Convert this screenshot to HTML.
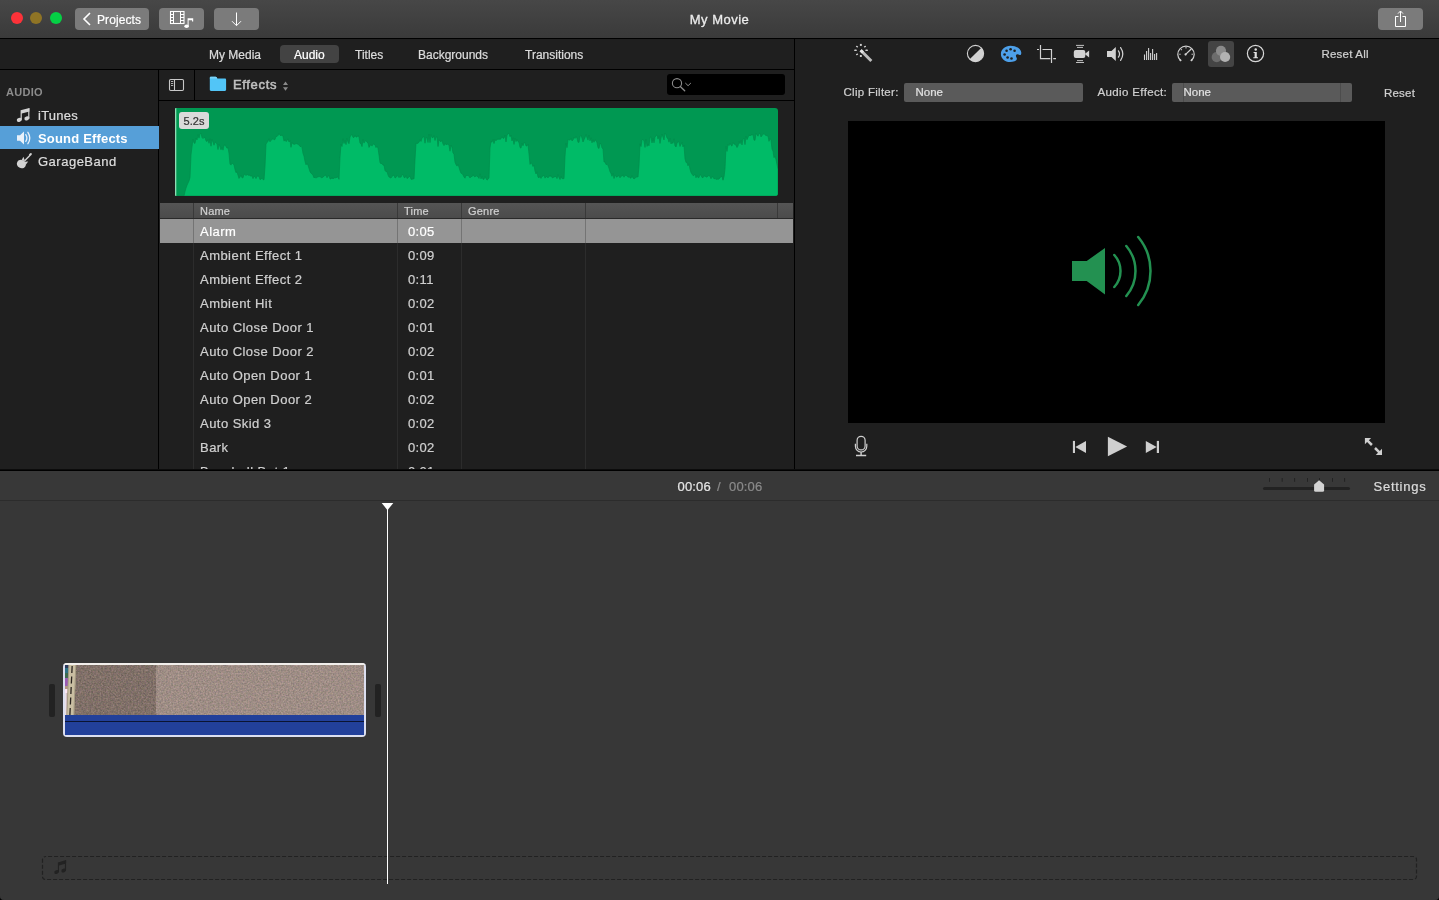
<!DOCTYPE html>
<html>
<head>
<meta charset="utf-8">
<title>My Movie</title>
<style>
*{box-sizing:border-box;margin:0;padding:0}
html,body{width:1439px;height:900px;overflow:hidden;background:#000;}
body{font-family:"Liberation Sans",sans-serif;font-size:13px;color:#d6d6d6;position:relative;-webkit-font-smoothing:antialiased;-webkit-text-stroke:.22px currentColor}
.abs{position:absolute}
#win{position:absolute;left:0;top:0;width:1439px;height:900px;background:#1f1f1f;border-radius:0 0 4px 4px;overflow:hidden;will-change:transform}
/* title bar */
#title{position:absolute;left:0;top:0;width:1439px;height:38px;background:linear-gradient(#474747,#3a3a3a)}
#title .ttl{position:absolute;left:0;width:1439px;top:12px;text-align:center;font-size:13px;color:#ececec;letter-spacing:.5px;-webkit-text-stroke:.3px #ececec}
.tl{position:absolute;top:12px;width:12px;height:12px;border-radius:50%}
.tbtn{position:absolute;top:8px;height:22px;background:#7b7b7b;border-radius:4px;color:#fff}
#titleline{position:absolute;left:0;top:38px;width:1439px;height:1px;background:#000}
/* tabs */
#tabs{position:absolute;left:0;top:39px;width:794px;height:30px}
#tabs span{position:absolute;top:9px;font-size:12px;color:#dcdcdc;white-space:nowrap}
#tabsel{position:absolute;left:280px;top:6px;width:59px;height:18px;background:#434343;border-radius:4px}
.hline{position:absolute;height:1px;background:#000}
.vline{position:absolute;width:1px;background:#000}
/* sidebar */
#side{position:absolute;left:0;top:70px;width:158px;height:399px}
#side .hd{position:absolute;left:6px;top:85px;font-size:11px;font-weight:bold;color:#8c8c8c}
.srow{position:absolute;left:0;width:159px;height:23px;font-size:13px;color:#dcdcdc}
.srow span{position:absolute;left:38px;top:5px;white-space:nowrap}
/* table */
#thead{position:absolute;left:160px;top:203px;width:633px;height:15px;background:linear-gradient(#555555,#4b4b4b);font-size:11px;color:#d0d0d0}
#thead span{position:absolute;top:2px;letter-spacing:.2px}
.row{position:absolute;left:160px;width:633px;height:24px;font-size:13px;color:#cfcfcf}
.row .n{position:absolute;left:40px;top:5px;white-space:nowrap;letter-spacing:.46px}
.row .t{position:absolute;left:248px;top:5px;white-space:nowrap;letter-spacing:.35px}
.row.sel{background:#959595;color:#fff}
/* right */
.lbl{position:absolute;font-size:11.5px;color:#d0d0d0;white-space:nowrap}
.sel2{position:absolute;height:19px;background:#5a5a5a;border-radius:2px;font-size:11.5px;color:#e0e0e0}
.sel2 span{position:absolute;left:11.500px;top:3px}
/* timeline */
#tlbar{position:absolute;left:0;top:471px;width:1439px;height:29px;background:#383838}
#tline{position:absolute;left:0;top:500px;width:1439px;height:1px;background:#2c2c2c}
#tlarea{position:absolute;left:0;top:501px;width:1439px;height:399px;background:#373737}
</style>
</head>
<body>
<div id="win">

<!-- TITLE BAR -->
<div id="title">
  <div class="tl" style="left:11px;background:#fc3239"></div>
  <div class="tl" style="left:30px;background:#8f7425"></div>
  <div class="tl" style="left:50px;background:#05d045"></div>
  <div class="tbtn" style="left:75px;width:74px">
    <svg class="abs" style="left:7px;top:4px" width="10" height="14" viewBox="0 0 10 14"><path d="M8 1 L2 7 L8 13" fill="none" stroke="#fff" stroke-width="1.6"/></svg>
    <span class="abs" style="left:22px;top:5px;font-size:12px;letter-spacing:.1px">Projects</span>
  </div>
  <div class="tbtn" style="left:159px;width:45px">
    <svg class="abs" style="left:9px;top:2px" width="28" height="20" viewBox="168 10 28 20">
      <rect x="170.500" y="11.500" width="13.500" height="12" fill="none" stroke="#fff" stroke-width="1.1"/>
      <path d="M173.500 11.500v12M180.500 11.500v12M170.500 14.500h3M170.500 17.500h3M170.500 20.500h3M180.500 14.500h3.500M180.500 17.500h3.500M180.500 20.500h3.500" fill="none" stroke="#fff" stroke-width="1"/>
      <path d="M187.600 18.300h5.600v3.200h-1.200v-1.200h-3.400v6h-1z" fill="#fff"/>
      <ellipse cx="186.600" cy="26.200" rx="2.300" ry="1.800" fill="#fff"/>
    </svg>
  </div>
  <div class="tbtn" style="left:214px;width:45px">
    <svg class="abs" style="left:16px;top:4px" width="13" height="15" viewBox="0 0 13 15"><path d="M6.5 0.5v13M2 9.2l4.500 4.500l4.500 -4.500" fill="none" stroke="#fff" stroke-width="1"/></svg>
  </div>
  <div class="ttl">My Movie</div>
  <div class="tbtn" style="left:1378px;width:45px">
    <svg class="abs" style="left:16px;top:2px" width="13" height="18" viewBox="0 0 13 18"><path d="M4.500 6.500H1.500v10h10v-10H8.500" fill="none" stroke="#fff" stroke-width="1"/><path d="M6.500 12V1.200M4 3.600l2.500-2.600l2.500 2.600" fill="none" stroke="#fff" stroke-width="1"/></svg>
  </div>
</div>
<div id="titleline"></div>

<!-- TABS -->
<div id="tabs">
  <div id="tabsel"></div>
  <span style="left:209px">My Media</span>
  <span style="left:294px;color:#fff">Audio</span>
  <span style="left:355px">Titles</span>
  <span style="left:418px">Backgrounds</span>
  <span style="left:525px">Transitions</span>
</div>
<div class="hline" style="left:0;top:69px;width:794px"></div>
<div class="vline" style="left:794px;top:39px;height:431px"></div>

<!-- SIDEBAR -->
<div class="abs" style="left:6px;top:86px;font-size:11px;font-weight:bold;color:#8c8c8c;letter-spacing:.3px;-webkit-text-stroke:0">AUDIO</div>
<svg class="abs" style="left:16px;top:107px" width="15" height="16" viewBox="0 0 15 16"><g fill="#d4d4d4"><path d="M4.600 3.300L13.400 1v3.400L5.800 6.400v6.400H4.600z"/><path d="M12.200 2v9.400h1.200V1z"/><ellipse cx="3.300" cy="12.900" rx="2.600" ry="1.900" transform="rotate(-20 3.300 12.900)"/><ellipse cx="10.900" cy="11.400" rx="2.600" ry="1.900" transform="rotate(-20 10.900 11.400)"/></g></svg>
<div class="srow" style="top:103px"><span style="letter-spacing:.25px">iTunes</span></div>
<div class="srow" style="top:126px;background:#569fd8;color:#fff;font-weight:bold;z-index:3;-webkit-text-stroke:0"><span style="letter-spacing:.18px">Sound Effects</span></div>
<svg class="abs" style="left:16px;top:152px" width="17" height="18" viewBox="16 152 17 18"><g fill="#d2d2d2"><path d="M21.600 159.900c1.300 0.100 2.600 0.700 3.400 1.700c1.200 1.500 1.200 3.400 0.300 4.800c-1.200 1.900-3.900 2.400-6 1.200c-2.200-1.200-3.100-3.800-2-5.700c0.800-1.500 2.500-2.200 4.300-2z"/><path d="M21.500 160.500l1.900-3.700l1.600 4.300z"/><path d="M24.800 161.700l3.400-0.300l-2.600 3.500z"/><path d="M24.200 160.300l5.400-5.500l1 1l-5.400 5.500z"/><ellipse cx="30.400" cy="154.500" rx="1.700" ry="1.150" transform="rotate(-45 30.400 154.500)"/></g></svg>
<div class="srow" style="top:149px"><span style="letter-spacing:.5px">GarageBand</span></div>
<svg class="abs" style="left:16px;top:130px;z-index:4" width="17" height="16" viewBox="0 0 17 16"><path d="M1 5.200h3l4-3.700v13l-4-3.700h-3z" fill="#e8f1fa"/><path d="M9.800 4.600q2.200 3.400 0 6.800M11.900 2.300q3.800 5.700 0 11.400" fill="none" stroke="#e8f1fa" stroke-width="1.300" stroke-linecap="round"/></svg>
<div class="vline" style="left:158px;top:70px;height:400px"></div>

<!-- BROWSER TOOLBAR -->
<div class="vline" style="left:194px;top:70px;height:30px"></div>
<div class="hline" style="left:159px;top:100px;width:635px"></div>
<div class="abs" style="left:233px;top:77px;font-size:13px;color:#c0c0c0;letter-spacing:.65px;-webkit-text-stroke:.5px #c0c0c0">Effects</div>
<div class="abs" style="left:667px;top:74px;width:118px;height:21px;background:#000;border-radius:3px"></div>

<svg class="abs" style="left:168px;top:78px" width="17" height="14" viewBox="168 78 17 14"><rect x="169.500" y="79.500" width="14" height="11" rx="1.200" fill="none" stroke="#c8c8c8" stroke-width="1.100"/><path d="M174.500 79.500v11" stroke="#c8c8c8" stroke-width="1.100"/><path d="M171 81.500h2.200M171 83.500h2.200M171 85.500h2.200" stroke="#b0b0b0" stroke-width="1"/></svg>
<svg class="abs" style="left:209px;top:76px" width="18" height="16" viewBox="209 76 18 16"><path d="M209.800 78c0-0.700 0.500-1.200 1.200-1.200h4.500c0.600 0 1 0.300 1.300 0.800l0.500 1h7.600c0.700 0 1.200 0.500 1.200 1.200v10c0 0.700-0.500 1.200-1.200 1.200h-13.900c-0.700 0-1.200-0.500-1.200-1.200z" fill="#52c5f7"/><path d="M209.800 78c0-0.700 0.500-1.200 1.200-1.200h4.500c0.600 0 1 0.300 1.300 0.800l0.500 1h-7.500z" fill="#7ad4fa"/></svg>
<svg class="abs" style="left:282px;top:81px" width="7" height="10" viewBox="0 0 7 10"><path d="M3.500 0.500L6 4H1zM3.500 9.700L6 6.200H1z" fill="#8a8a8a"/></svg>
<svg class="abs" style="left:670px;top:76px" width="24" height="17" viewBox="670 76 24 17"><circle cx="677" cy="83.200" r="4.600" fill="none" stroke="#8c8c8c" stroke-width="1.100"/><path d="M680.300 86.500l4.400 4.200" stroke="#8c8c8c" stroke-width="1.300" stroke-linecap="round"/><path d="M685.300 83l2.800 2.700l2.800-2.700" fill="none" stroke="#8c8c8c" stroke-width="1"/></svg>

<!-- WAVEFORM -->
<div id="wave" class="abs" style="left:175px;top:108px;width:603px;height:88px;background:#009852;border-radius:1px 3px 3px 1px;overflow:hidden">
<svg class="abs" style="left:0;top:0" width="603" height="88" viewBox="0 0 603 88"><path d="M0 88 L0.0 88.0 L1.0 88.0 L2.0 88.0 L3.0 88.0 L4.0 88.0 L5.0 88.0 L6.0 88.0 L7.0 88.0 L8.0 88.0 L9.0 88.0 L10.0 83.5 L11.0 80.0 L12.0 77.3 L13.0 75.0 L14.0 72.9 L15.0 69.4 L16.0 46.8 L17.0 38.8 L18.0 31.1 L19.0 34.9 L20.0 35.4 L21.0 30.0 L22.0 31.9 L23.0 26.7 L24.0 30.2 L25.0 26.1 L26.0 25.0 L27.0 29.5 L28.0 30.5 L29.0 29.5 L30.0 29.4 L31.0 32.9 L32.0 33.6 L33.0 31.3 L34.0 35.3 L35.0 30.9 L36.0 38.2 L37.0 31.5 L38.0 34.0 L39.0 37.2 L40.0 34.3 L41.0 34.3 L42.0 36.2 L43.0 41.6 L44.0 36.1 L45.0 38.8 L46.0 41.8 L47.0 39.1 L48.0 42.1 L49.0 37.4 L50.0 36.8 L51.0 38.6 L52.0 40.3 L53.0 39.4 L54.0 45.3 L55.0 56.1 L56.0 57.1 L57.0 55.0 L58.0 55.9 L59.0 56.8 L60.0 61.5 L61.0 64.7 L62.0 63.8 L63.0 67.2 L64.0 70.4 L65.0 69.0 L66.0 67.1 L67.0 69.8 L68.0 69.8 L69.0 66.5 L70.0 66.0 L71.0 67.6 L72.0 66.0 L73.0 67.3 L74.0 67.0 L75.0 67.5 L76.0 68.2 L77.0 67.6 L78.0 70.6 L79.0 68.0 L80.0 68.9 L81.0 70.6 L82.0 68.2 L83.0 68.1 L84.0 68.5 L85.0 71.7 L86.0 71.0 L87.0 70.1 L88.0 71.6 L89.0 71.8 L90.0 58.3 L91.0 36.1 L92.0 34.6 L93.0 33.2 L94.0 30.9 L95.0 33.8 L96.0 32.3 L97.0 31.4 L98.0 30.8 L99.0 31.8 L100.0 31.5 L101.0 28.4 L102.0 28.5 L103.0 27.5 L104.0 25.3 L105.0 27.3 L106.0 27.7 L107.0 26.9 L108.0 28.4 L109.0 33.1 L110.0 31.8 L111.0 33.6 L112.0 32.7 L113.0 30.9 L114.0 34.0 L115.0 32.6 L116.0 39.3 L117.0 34.5 L118.0 35.9 L119.0 36.2 L120.0 36.3 L121.0 35.4 L122.0 35.9 L123.0 36.1 L124.0 37.2 L125.0 38.4 L126.0 38.6 L127.0 39.6 L128.0 45.3 L129.0 48.2 L130.0 53.3 L131.0 56.8 L132.0 55.4 L133.0 57.2 L134.0 60.4 L135.0 63.7 L136.0 65.3 L137.0 65.8 L138.0 67.3 L139.0 69.9 L140.0 69.1 L141.0 70.2 L142.0 69.2 L143.0 68.8 L144.0 68.6 L145.0 68.6 L146.0 69.3 L147.0 70.0 L148.0 68.8 L149.0 68.4 L150.0 67.0 L151.0 67.4 L152.0 69.8 L153.0 68.0 L154.0 67.4 L155.0 70.9 L156.0 71.0 L157.0 69.7 L158.0 71.0 L159.0 69.9 L160.0 69.8 L161.0 69.9 L162.0 69.1 L163.0 69.1 L164.0 71.3 L165.0 49.1 L166.0 36.1 L167.0 38.5 L168.0 30.8 L169.0 35.6 L170.0 32.4 L171.0 36.6 L172.0 30.3 L173.0 34.2 L174.0 35.7 L175.0 29.1 L176.0 27.0 L177.0 26.5 L178.0 29.3 L179.0 29.4 L180.0 27.7 L181.0 28.9 L182.0 29.1 L183.0 27.5 L184.0 29.2 L185.0 35.2 L186.0 35.6 L187.0 38.6 L188.0 31.4 L189.0 35.1 L190.0 33.1 L191.0 32.6 L192.0 34.2 L193.0 34.9 L194.0 39.4 L195.0 37.7 L196.0 36.6 L197.0 38.1 L198.0 36.0 L199.0 36.1 L200.0 36.9 L201.0 39.6 L202.0 38.2 L203.0 40.2 L204.0 46.9 L205.0 54.8 L206.0 55.7 L207.0 55.4 L208.0 57.2 L209.0 57.0 L210.0 62.5 L211.0 63.7 L212.0 63.5 L213.0 67.0 L214.0 69.1 L215.0 69.4 L216.0 70.1 L217.0 68.3 L218.0 67.7 L219.0 67.0 L220.0 70.0 L221.0 69.4 L222.0 67.5 L223.0 68.6 L224.0 69.5 L225.0 68.8 L226.0 69.3 L227.0 66.8 L228.0 66.4 L229.0 69.4 L230.0 69.8 L231.0 67.3 L232.0 70.5 L233.0 70.0 L234.0 68.7 L235.0 68.1 L236.0 71.2 L237.0 71.4 L238.0 70.8 L239.0 70.9 L240.0 51.6 L241.0 35.0 L242.0 35.7 L243.0 35.1 L244.0 34.3 L245.0 31.8 L246.0 33.4 L247.0 30.3 L248.0 28.8 L249.0 28.6 L250.0 35.2 L251.0 29.6 L252.0 29.5 L253.0 34.5 L254.0 26.3 L255.0 34.6 L256.0 26.6 L257.0 29.5 L258.0 29.7 L259.0 27.7 L260.0 32.5 L261.0 29.1 L262.0 28.8 L263.0 38.5 L264.0 31.9 L265.0 32.9 L266.0 33.8 L267.0 32.3 L268.0 36.0 L269.0 37.6 L270.0 35.5 L271.0 36.7 L272.0 36.3 L273.0 36.0 L274.0 37.5 L275.0 43.2 L276.0 37.0 L277.0 39.5 L278.0 44.9 L279.0 46.2 L280.0 54.2 L281.0 56.5 L282.0 58.1 L283.0 56.3 L284.0 59.2 L285.0 62.7 L286.0 65.2 L287.0 65.4 L288.0 66.9 L289.0 69.0 L290.0 70.2 L291.0 67.5 L292.0 67.5 L293.0 67.5 L294.0 68.0 L295.0 70.0 L296.0 68.4 L297.0 68.7 L298.0 66.6 L299.0 68.3 L300.0 69.0 L301.0 67.8 L302.0 68.1 L303.0 68.9 L304.0 70.4 L305.0 65.8 L306.0 70.9 L307.0 68.5 L308.0 71.3 L309.0 71.3 L310.0 68.3 L311.0 70.5 L312.0 72.1 L313.0 71.3 L314.0 69.9 L315.0 39.9 L316.0 33.4 L317.0 34.2 L318.0 31.4 L319.0 35.6 L320.0 31.4 L321.0 32.8 L322.0 31.0 L323.0 31.5 L324.0 30.9 L325.0 31.5 L326.0 30.7 L327.0 28.6 L328.0 30.3 L329.0 30.2 L330.0 27.0 L331.0 33.9 L332.0 27.5 L333.0 25.5 L334.0 25.4 L335.0 28.7 L336.0 27.4 L337.0 32.9 L338.0 29.8 L339.0 36.4 L340.0 30.1 L341.0 33.6 L342.0 31.6 L343.0 33.5 L344.0 34.3 L345.0 39.5 L346.0 40.1 L347.0 35.5 L348.0 37.8 L349.0 34.7 L350.0 34.5 L351.0 37.9 L352.0 37.9 L353.0 36.4 L354.0 45.8 L355.0 56.4 L356.0 54.6 L357.0 55.9 L358.0 58.5 L359.0 57.0 L360.0 63.0 L361.0 66.0 L362.0 63.9 L363.0 69.2 L364.0 69.8 L365.0 68.4 L366.0 70.4 L367.0 68.1 L368.0 68.2 L369.0 67.2 L370.0 70.1 L371.0 68.7 L372.0 68.5 L373.0 70.0 L374.0 67.7 L375.0 68.5 L376.0 67.7 L377.0 69.6 L378.0 69.9 L379.0 68.7 L380.0 69.0 L381.0 68.2 L382.0 70.6 L383.0 66.7 L384.0 69.5 L385.0 71.5 L386.0 68.5 L387.0 70.6 L388.0 70.6 L389.0 70.7 L390.0 48.4 L391.0 35.2 L392.0 39.7 L393.0 31.6 L394.0 31.5 L395.0 32.2 L396.0 30.2 L397.0 32.9 L398.0 32.0 L399.0 29.4 L400.0 30.4 L401.0 28.4 L402.0 30.2 L403.0 34.3 L404.0 34.3 L405.0 28.5 L406.0 27.5 L407.0 30.0 L408.0 34.0 L409.0 31.7 L410.0 29.5 L411.0 26.5 L412.0 29.7 L413.0 32.1 L414.0 27.4 L415.0 32.8 L416.0 29.9 L417.0 34.8 L418.0 31.9 L419.0 34.2 L420.0 31.9 L421.0 32.6 L422.0 34.7 L423.0 39.7 L424.0 40.5 L425.0 35.2 L426.0 35.9 L427.0 39.9 L428.0 41.0 L429.0 54.0 L430.0 53.9 L431.0 56.5 L432.0 56.4 L433.0 57.6 L434.0 60.2 L435.0 63.7 L436.0 65.5 L437.0 68.3 L438.0 65.3 L439.0 70.5 L440.0 67.5 L441.0 68.5 L442.0 69.2 L443.0 67.7 L444.0 67.8 L445.0 69.8 L446.0 67.6 L447.0 68.3 L448.0 66.8 L449.0 69.2 L450.0 67.2 L451.0 67.4 L452.0 67.8 L453.0 69.3 L454.0 68.7 L455.0 69.8 L456.0 70.2 L457.0 67.7 L458.0 70.0 L459.0 71.0 L460.0 70.2 L461.0 69.3 L462.0 68.8 L463.0 69.0 L464.0 57.8 L465.0 35.9 L466.0 38.6 L467.0 32.0 L468.0 31.0 L469.0 33.3 L470.0 39.4 L471.0 31.3 L472.0 38.4 L473.0 36.4 L474.0 37.8 L475.0 29.5 L476.0 28.8 L477.0 34.9 L478.0 30.4 L479.0 34.8 L480.0 29.3 L481.0 27.5 L482.0 27.0 L483.0 31.1 L484.0 27.8 L485.0 35.4 L486.0 30.0 L487.0 26.0 L488.0 29.2 L489.0 32.0 L490.0 25.0 L491.0 26.7 L492.0 29.9 L493.0 30.9 L494.0 34.2 L495.0 30.2 L496.0 35.9 L497.0 34.5 L498.0 35.4 L499.0 30.9 L500.0 37.8 L501.0 39.0 L502.0 35.3 L503.0 33.4 L504.0 34.1 L505.0 38.5 L506.0 36.4 L507.0 34.4 L508.0 38.9 L509.0 37.0 L510.0 50.8 L511.0 54.4 L512.0 54.5 L513.0 57.8 L514.0 55.8 L515.0 61.2 L516.0 64.4 L517.0 66.1 L518.0 67.6 L519.0 67.5 L520.0 66.0 L521.0 69.8 L522.0 67.3 L523.0 69.6 L524.0 69.6 L525.0 66.5 L526.0 67.2 L527.0 69.4 L528.0 69.7 L529.0 67.8 L530.0 68.3 L531.0 68.7 L532.0 69.2 L533.0 67.9 L534.0 67.4 L535.0 68.3 L536.0 70.7 L537.0 68.8 L538.0 68.9 L539.0 70.9 L540.0 70.4 L541.0 71.4 L542.0 71.1 L543.0 71.3 L544.0 71.0 L545.0 69.8 L546.0 68.6 L547.0 68.4 L548.0 72.2 L549.0 68.7 L550.0 60.8 L551.0 38.3 L552.0 43.4 L553.0 36.5 L554.0 37.6 L555.0 35.0 L556.0 37.3 L557.0 38.1 L558.0 34.1 L559.0 36.2 L560.0 36.0 L561.0 37.5 L562.0 39.5 L563.0 38.0 L564.0 33.1 L565.0 35.7 L566.0 32.5 L567.0 36.9 L568.0 31.1 L569.0 30.2 L570.0 36.6 L571.0 28.1 L572.0 31.7 L573.0 29.4 L574.0 26.9 L575.0 28.0 L576.0 26.9 L577.0 27.1 L578.0 26.5 L579.0 32.1 L580.0 32.3 L581.0 25.2 L582.0 26.8 L583.0 28.2 L584.0 25.8 L585.0 25.0 L586.0 28.9 L587.0 27.6 L588.0 26.1 L589.0 25.8 L590.0 26.8 L591.0 27.5 L592.0 27.7 L593.0 28.0 L594.0 33.3 L595.0 30.6 L596.0 32.0 L597.0 41.0 L598.0 43.2 L599.0 49.6 L600.0 48.6 L601.0 51.4 L602.0 56.4 L603.0 61.3 L603 88 Z" fill="#00bb67" stroke="#008d4c" stroke-width="0.7" stroke-linejoin="round"/><rect x="0" y="0" width="1.3" height="88" fill="#8fdcb4"/></svg>
<div class="abs" style="left:4px;top:4px;width:30px;height:17px;background:#dadada;border-radius:3px;color:#333;font-size:11px;text-align:center;line-height:19px">5.2s</div>
</div>

<!-- TABLE -->
<div id="thead">
  <span style="left:40px">Name</span><span style="left:244px">Time</span><span style="left:308px">Genre</span>
</div>
<div class="hline" style="left:160px;top:218px;width:633px;background:#2a2a2a"></div>
<div class="row sel" style="top:219px"><span class="n">Alarm</span><span class="t">0:05</span></div>
<div class="row" style="top:243px"><span class="n">Ambient Effect 1</span><span class="t">0:09</span></div>
<div class="row" style="top:267px"><span class="n">Ambient Effect 2</span><span class="t">0:11</span></div>
<div class="row" style="top:291px"><span class="n">Ambient Hit</span><span class="t">0:02</span></div>
<div class="row" style="top:315px"><span class="n">Auto Close Door 1</span><span class="t">0:01</span></div>
<div class="row" style="top:339px"><span class="n">Auto Close Door 2</span><span class="t">0:02</span></div>
<div class="row" style="top:363px"><span class="n">Auto Open Door 1</span><span class="t">0:01</span></div>
<div class="row" style="top:387px"><span class="n">Auto Open Door 2</span><span class="t">0:02</span></div>
<div class="row" style="top:411px"><span class="n">Auto Skid 3</span><span class="t">0:02</span></div>
<div class="row" style="top:435px"><span class="n">Bark</span><span class="t">0:02</span></div>
<div class="row" style="top:459px"><span class="n">Baseball Bat 1</span><span class="t">0:01</span></div>
<div class="vline" style="left:193px;top:203px;height:15px;background:#393939"></div><div class="vline" style="left:193px;top:219px;height:24px;background:#747474"></div><div class="vline" style="left:193px;top:243px;height:226px;background:#2c2c2c"></div>
<div class="vline" style="left:397px;top:203px;height:15px;background:#393939"></div><div class="vline" style="left:397px;top:219px;height:24px;background:#747474"></div><div class="vline" style="left:397px;top:243px;height:226px;background:#2c2c2c"></div>
<div class="vline" style="left:461px;top:203px;height:15px;background:#393939"></div><div class="vline" style="left:461px;top:219px;height:24px;background:#747474"></div><div class="vline" style="left:461px;top:243px;height:226px;background:#2c2c2c"></div>
<div class="vline" style="left:585px;top:203px;height:15px;background:#393939"></div><div class="vline" style="left:585px;top:219px;height:24px;background:#747474"></div><div class="vline" style="left:585px;top:243px;height:226px;background:#2c2c2c"></div>
<div class="vline" style="left:777px;top:203px;height:15px;background:#393939"></div>

<!-- RIGHT PANEL -->
<div class="lbl" style="left:843.500px;top:86px;letter-spacing:.28px">Clip Filter:</div>
<div class="sel2" style="left:904px;top:83px;width:179px"><span>None</span></div>
<div class="lbl" style="left:1097.500px;top:86px;letter-spacing:.36px">Audio Effect:</div>
<div class="sel2" style="left:1172px;top:83px;width:180px"><span>None</span><i style="position:absolute;left:11px;top:0;width:1px;height:19px;background:#4c4c4c"></i><i style="position:absolute;left:168px;top:0;width:1px;height:19px;background:#4c4c4c"></i></div>
<div class="lbl" style="left:1384px;top:87px;letter-spacing:.2px">Reset</div>
<div class="lbl" style="left:1321.500px;top:48px;letter-spacing:.2px">Reset All</div>
<div class="abs" style="left:848px;top:121px;width:537px;height:302px;background:#000"></div>


<!-- right toolbar icons -->
<svg class="abs" style="left:840px;top:39px" width="440" height="30" viewBox="840 39 440 30">
 <!-- wand -->
 <g fill="#cfcfcf">
  <path d="M859.600 51.300l2.100-2.100l10.700 10.700l-2.100 2.100z" fill="#bdbdbd"/>
  <path d="M859.600 51.300l2.100-2.100l2.300 2.300l-2.100 2.100z" fill="#e6e6e6"/>
  <rect x="859.900" y="43.900" width="1.900" height="2" />
  <rect x="859.900" y="55" width="1.900" height="2" />
  <rect x="854.200" y="49.600" width="2.600" height="1.500" rx=".7"/>
  <rect x="865.300" y="49.600" width="2.600" height="1.500" rx=".7"/>
  <rect x="855.900" y="45.900" width="2.300" height="1.400" rx=".7" transform="rotate(25 857 46.600)"/>
  <rect x="863.800" y="45.900" width="2.300" height="1.400" rx=".7" transform="rotate(-25 865 46.600)"/>
  <rect x="855.900" y="53.700" width="2.300" height="1.400" rx=".7" transform="rotate(-25 857 54.400)"/>
 </g>
 <!-- contrast -->
 <circle cx="975.500" cy="53.500" r="8.100" fill="none" stroke="#d2d2d2" stroke-width="1.100"/>
 <path d="M981.600 47.400A8.650 8.650 0 0 1 969.400 59.600z" fill="#d2d2d2"/>
 <!-- palette -->
 <path d="M1010.500 45.700C1016.500 45.700 1021.300 48.800 1021.300 52.800C1021.300 54.700 1020.600 55.400 1019.600 55C1018.600 54.600 1017.600 54 1016.600 54.600C1015.400 55.400 1016 56.800 1016.600 57.800C1017.400 59.200 1016.400 60.600 1014.600 61.300C1013.200 61.800 1011.600 62.100 1010 62.100C1004.900 62.100 1000.900 58.600 1000.900 54C1000.900 49.400 1005 45.700 1010.500 45.700Z" fill="#4da0ea"/>
 <g fill="#1f1f1f"><circle cx="1006.600" cy="50.700" r="1.300"/><circle cx="1010.600" cy="49.300" r="1.300"/><circle cx="1014.600" cy="50.700" r="1.300"/><circle cx="1004.600" cy="54.500" r="1.300"/><circle cx="1007.600" cy="57.500" r="1.300"/><circle cx="1011.500" cy="58.500" r="1.300"/></g>
 <!-- crop -->
 <path d="M1040.500 45v13.700h9.800M1042.500 49.500h9v13.500M1037 49.500h2M1053.200 58.700h2.800" fill="none" stroke="#d2d2d2" stroke-width="1.200"/>
 <!-- camera -->
 <g fill="#d2d2d2"><rect x="1073.800" y="50" width="11.500" height="8" rx="2"/><path d="M1084.800 54l4.300-3.600v7.200z"/>
 <rect x="1076" y="44.900" width="8" height="0.900"/><rect x="1077" y="46.900" width="6" height="0.900"/><rect x="1077" y="60.200" width="6" height="0.900"/><rect x="1076" y="62.100" width="8" height="0.900"/></g>
 <!-- speaker -->
 <path d="M1107 51.100h4.500l4.300-4v14l-4.300-4h-4.500z" fill="#d2d2d2"/>
 <path d="M1118.400 50.800q2.300 3.200 0 6.400M1120.600 47.600q4.400 6.400 0 12.800" fill="none" stroke="#d2d2d2" stroke-width="1.200" stroke-linecap="round"/>
 <!-- eq bars -->
 <path d="M1144.500 54.400v5.600M1146.600 51.100v8.900M1148.600 47.900v12.100M1150.600 53v7M1152.600 49v11M1154.600 54v6M1156.600 53v7" stroke="#d2d2d2" stroke-width="1.100"/>
 <!-- speedometer -->
 <path d="M1180.400 60.400A8.200 8.200 0 1 1 1191.600 60.400" fill="none" stroke="#d2d2d2" stroke-width="1.200"/>
 <path d="M1179.600 59.400l1.600 1.400M1192.400 59.400l-1.600 1.400" stroke="#d2d2d2" stroke-width="1.600"/>
 <path d="M1185.400 54.600L1191.200 49" stroke="#d2d2d2" stroke-width="1.200" stroke-linecap="round"/><circle cx="1185.600" cy="54.400" r="1.100" fill="#d2d2d2"/>
 <path d="M1179.200 54.300h1.500M1191.500 54.300h1.500M1186 47v1.500M1180.900 49.200l1 1" stroke="#bdbdbd" stroke-width="1.100"/>
 <!-- filter -->
 <rect x="1208" y="41" width="26" height="26" rx="3" fill="#444"/>
 <circle cx="1216.700" cy="57.100" r="5.100" fill="#6c6c6c"/><circle cx="1221" cy="50.800" r="5.100" fill="#8a8a8a"/><circle cx="1225.100" cy="57" r="5.100" fill="#b2b2b2"/>
 <!-- info -->
 <circle cx="1255.500" cy="53.500" r="8.100" fill="none" stroke="#d8d8d8" stroke-width="1.200"/>
 <circle cx="1255.700" cy="49.600" r="1.250" fill="#e0e0e0"/>
 <path d="M1253.600 52h3.200v5.200h1.200v1.100h-4.700v-1.100h1.300v-4.100h-1z" fill="#e0e0e0"/>
</svg>
<!-- big speaker -->
<svg class="abs" style="left:1060px;top:230px" width="100" height="82" viewBox="1060 230 100 82">
 <path d="M1072 261h14.700l18.300-13v46.500l-18.300-13.500h-14.700z" fill="#239151"/>
 <path d="M1114.300 255A23.700 23.700 0 0 1 1114.300 287M1126.300 246A38.600 38.600 0 0 1 1126.300 296M1138.200 237A53.100 53.100 0 0 1 1138.200 305" fill="none" stroke="#239151" stroke-width="2.500" stroke-linecap="round"/>
</svg>
<!-- transport -->
<svg class="abs" style="left:850px;top:430px" width="540" height="32" viewBox="850 430 540 32">
 <g fill="none" stroke="#cfcfcf" stroke-width="1.200">
  <rect x="857.100" y="436.300" width="8" height="13.600" rx="4"/>
  <path d="M855.400 443.700v2.600a5.700 5.700 0 0 0 11.400 0v-2.600"/>
  <path d="M861.100 452v3.400M856 455.500h10.200" stroke-width="1.400"/>
 </g>
 <g fill="#cfcfcf">
  <rect x="1072.900" y="440.900" width="2.100" height="12.100"/><path d="M1075.300 447l10.700-6v12z"/>
  <path d="M1107.900 436.700l19.200 9.800l-19.200 9.800z"/>
  <path d="M1145.800 441l10.900 6l-10.900 6z"/><rect x="1156.800" y="440.900" width="2.200" height="12.100"/>
  <path d="M1364.900 438h6.200l-2.200 2.200l3.900 3.900l-1.800 1.800l-3.900-3.900l-2.200 2.200z"/>
  <path d="M1382 455h-6.200l2.200-2.200l-3.900-3.900l1.800-1.800l3.900 3.900l2.200-2.200z"/>
 </g>
</svg>

<!-- DIVIDER + TIMELINE -->
<div class="hline" style="left:0;top:469px;width:1439px;height:1px;background:#0c0c0c"></div><div class="hline" style="left:0;top:470px;width:1439px;height:1px"></div>
<div id="tlbar"></div>
<div id="tline"></div>
<div id="tlarea"></div>
<div class="abs" style="left:677.500px;top:479px;font-size:13px;color:#e6e6e6;white-space:nowrap;letter-spacing:.15px">00:06<span style="color:#8a8a8a;position:absolute;left:39.500px;top:0">/</span><span style="color:#8a8a8a;position:absolute;left:51.500px;top:0">00:06</span></div>
<div class="abs" style="left:1373.500px;top:479px;font-size:13px;color:#dcdcdc;letter-spacing:.75px">Settings</div>


<!-- zoom slider -->
<svg class="abs" style="left:1260px;top:474px" width="95" height="22" viewBox="1260 474 95 22">
 <path d="M1269.500 478v3.800M1282.200 478v3.800M1294.600 478v3.800M1307.500 478v3.800M1319.500 478v3.800M1332.500 478v3.800M1344.600 478v3.800" stroke="#232323" stroke-width="1"/>
 <rect x="1263" y="487" width="87" height="3" rx="1.500" fill="#222"/>
 <path d="M1319.100 480.200l5 4.300v5.700q0 1.500-1.500 1.500h-7q-1.500 0-1.500-1.500v-5.700z" fill="#d2d2d2"/>
</svg>
<!-- clip -->
<div class="abs" style="left:49px;top:684px;width:6px;height:33px;background:#222;border-radius:2px"></div>
<div class="abs" style="left:375px;top:684px;width:6px;height:33px;background:#222;border-radius:2px"></div>
<div class="abs" style="left:63px;top:663px;width:303px;height:74px;border-radius:4px;background:#dcdff0;overflow:hidden">
 <div class="abs" style="left:0;top:0;width:303px;height:2px;background:#f2efec"></div>
 <svg class="abs" style="left:2px;top:2px" width="299" height="50" viewBox="0 0 299 50">
  <defs>
   <filter id="nzA" x="0" y="0" width="100%" height="100%" color-interpolation-filters="sRGB"><feTurbulence type="fractalNoise" baseFrequency="0.6" numOctaves="2" seed="3"/><feColorMatrix type="matrix" values="0.29000000000000004 0 0 0 0.357  0.2 0.09 0 0 0.294  0.2 0 0.09 0 0.263  0 0 0 0 1"/></filter>
   <filter id="nzB" x="0" y="0" width="100%" height="100%" color-interpolation-filters="sRGB"><feTurbulence type="fractalNoise" baseFrequency="0.6" numOctaves="2" seed="8"/><feColorMatrix type="matrix" values="0.29000000000000004 0 0 0 0.475  0.2 0.09 0 0 0.408  0.2 0 0.09 0 0.377  0 0 0 0 1"/></filter>
  </defs>
  <rect x="0" y="0" width="91" height="50" fill="#80706a"/>
  <rect x="91" y="0" width="208" height="50" fill="#9e8d85"/>
  <rect x="0" y="0" width="91" height="50" filter="url(#nzA)"/>
  <rect x="91" y="0" width="208" height="50" filter="url(#nzB)"/>
  <rect x="0" y="0" width="4" height="50" fill="#bfa2aa"/>
  <rect x="0" y="0" width="4" height="3" fill="#2b3b5e"/><rect x="0" y="3" width="4" height="5" fill="#2e7084"/><rect x="0" y="8" width="4" height="5" fill="#3e6a4e"/><rect x="0" y="13" width="4" height="8" fill="#9a5ab2"/><rect x="0" y="21" width="4" height="3" fill="#b59482"/><rect x="0" y="24" width="4" height="4" fill="#fbe4f2"/><rect x="0" y="28" width="1.500" height="22" fill="#eadfe6"/>
  <path d="M3.700 0h7.300l-2 50h-7.300z" fill="#c9bea2"/>
  <path d="M3.900 0L1.900 50M10.800 0L8.800 50" stroke="#a39880" stroke-width="0.900" fill="none"/>
  <path d="M7.200 0L4.900 50" stroke="#2a2420" stroke-width="1.300" stroke-dasharray="7 3.500" stroke-dashoffset="-1"/>
 </svg>
 <div class="abs" style="left:2px;top:52px;width:299px;height:20px;background:#22409a"></div>
 <div class="abs" style="left:2px;top:58px;width:299px;height:1px;background:#0b1432"></div>
</div>
<!-- music well -->
<svg class="abs" style="left:40px;top:854px" width="1380" height="28" viewBox="40 854 1380 28">
 <rect x="42.500" y="856.500" width="1374" height="23" rx="3" fill="none" stroke="#212121" stroke-width="1.2" stroke-dasharray="4 2" stroke-dashoffset="3.4"/>
 <g fill="#222" transform="translate(53.600 859.100) scale(0.93 1)"><path d="M4.600 3.300L13.400 1v3.400L5.800 6.400v6.400H4.600z"/><path d="M12.200 2v9.400h1.200V1z"/><ellipse cx="3.300" cy="12.900" rx="2.600" ry="1.900" transform="rotate(-20 3.300 12.900)"/><ellipse cx="10.900" cy="11.400" rx="2.600" ry="1.900" transform="rotate(-20 10.900 11.400)"/></g>
</svg>
<!-- playhead -->
<svg class="abs" style="left:380px;top:502px" width="14" height="10" viewBox="380 502 14 10"><path d="M381.700 503h11.600l-5.800 7.200z" fill="#fff"/></svg>

<div class="abs" style="left:387px;top:503px;width:1px;height:381px;background:#fff"></div>

</div>
</body>
</html>
